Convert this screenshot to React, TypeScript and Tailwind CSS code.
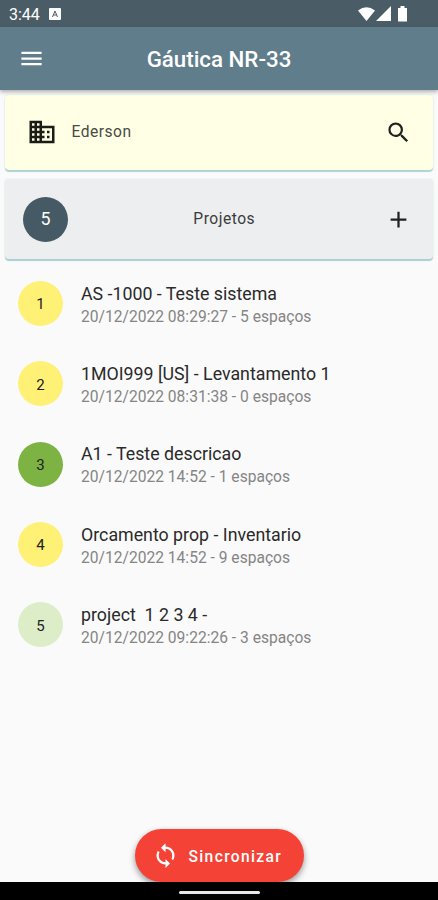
import { MdAdd, MdDomain, MdMenu, MdSearch, MdSync } from 'react-icons/md';

interface Project {
  id: number;
  name: string;
  info: string;
  color: string;
}

const PROJECTS: Project[] = [
  { id: 1, name: 'AS -1000 - Teste sistema', info: '20/12/2022 08:29:27 - 5 espaços', color: 'bg-[#fff176]' },
  { id: 2, name: '1MOI999 [US] - Levantamento 1', info: '20/12/2022 08:31:38 - 0 espaços', color: 'bg-[#fff176]' },
  { id: 3, name: 'A1 - Teste descricao', info: '20/12/2022 14:52 - 1 espaços', color: 'bg-[#7cb342]' },
  { id: 4, name: 'Orcamento prop - Inventario', info: '20/12/2022 14:52 - 9 espaços', color: 'bg-[#fff176]' },
  { id: 5, name: 'project  1 2 3 4 -', info: '20/12/2022 09:22:26 - 3 espaços', color: 'bg-[#dcedc8]' },
];

const StatusBar = () => (
  <div className="flex h-[27px] shrink-0 items-center bg-[#4a5d67] pr-[30px] pl-[9px] text-white">
    <span className="pt-0.5 text-[16px] leading-none">3:44</span>
    <svg viewBox="0 0 12 12" className="ml-[9px] size-3">
      <rect width="12" height="12" rx="1" fill="#fff" />
      <path d="M3.500 9L6 3l2.500 6M4.500 7h3" stroke="#4a5d67" fill="none" />
    </svg>
    <svg viewBox="0 0 50 16" className="ml-auto h-4 w-[50px]" fill="#fff">
      <path d="M0 4.500Q8.500-2 17 4.500L8.500 15z" />
      <path d="M33 0v15h-15z" />
      <path d="M40 2h2.500V0h4v2H49v13.500h-9z" />
    </svg>
  </div>
);

const ProjectRow = ({ project }: { project: Project }) => (
  <li className="flex h-[80.300px] items-center pl-[18px]">
    <div className={`flex size-[45px] shrink-0 items-center justify-center rounded-full pt-0.5 text-[15px] text-[#212121] ${project.color}`}>
      {project.id}
    </div>
    <div className="ml-[18px] pt-[3px] whitespace-pre">
      <p className="text-[17.800px] leading-[23px] text-[#2a2a2a]">{project.name}</p>
      <p className="pt-px text-[15.600px] leading-[23px] text-[#858585]">{project.info}</p>
    </div>
  </li>
);

const App = () => {
  return (
    <div className="flex h-[900px] w-[438px] flex-col overflow-hidden bg-[#fafafa] font-['Roboto',sans-serif]">
      <StatusBar />
      <header className="z-10 grid h-[63px] shrink-0 grid-cols-[64px_1fr_64px] items-center bg-[#607d8b] text-white shadow-[0_2px_4px_rgba(0,0,0,0.3)]">
        <MdMenu className="ml-[18px] size-[27px]" />
        <h1 className="pt-0.5 text-center text-[22.300px] font-medium">Gáutica NR-33</h1>
      </header>

      <section className="mx-[5px] mt-[5px] flex h-[75px] shrink-0 items-center rounded-[4px] bg-[#ffffe6] pr-[21.500px] pl-[22px] shadow-[0_2px_1px_#add3d2,0_0_2px_#d5e6e6]">
        <MdDomain className="mb-px size-[30px] text-[#1c1c16]" />
        <span className="ml-[14.500px] pt-px text-[15.600px] tracking-[0.5px] text-[#4a4a46]">Ederson</span>
        <MdSearch className="ml-auto size-[27px] text-[#212121]" />
      </section>

      <section className="mx-[5px] mt-[9px] grid h-[80px] shrink-0 grid-cols-[64px_1fr_50px] items-center rounded-[4px] bg-[#eceef0] pr-[21.500px] pl-[18px] shadow-[0_2px_1px_#a8cfd3,0_0_2px_#d5e6e6]">
        <div className="flex size-[45px] items-center justify-center rounded-full bg-[#455a64] pt-px text-[17.800px] text-white">5</div>
        <span className="pt-0.5 text-center text-[15.600px] tracking-[0.5px] text-[#3c3c3c]">Projetos</span>
        <MdAdd className="ml-auto size-[27px] text-[#212121]" />
      </section>

      <ul className="mt-[4.500px]">
        {PROJECTS.map((project) => (
          <ProjectRow key={project.id} project={project} />
        ))}
      </ul>

      <div className="mt-auto flex shrink-0 justify-center">
        <button className="flex h-[53px] w-[169px] items-center rounded-full bg-[#f44336] pl-[17.500px] text-white shadow-[0_3px_6px_rgba(0,0,0,0.4)]">
          <MdSync className="size-[27px]" />
          <span className="ml-[9.500px] pt-1 text-[15.600px] font-medium tracking-[1.350px]">Sincronizar</span>
        </button>
      </div>
      <footer className="z-10 flex h-[18px] shrink-0 items-center justify-center bg-black pt-0.5">
        <div className="h-[3px] w-[81px] rounded-full bg-[#e8e8e8]" />
      </footer>
    </div>
  );
};

export default App;
